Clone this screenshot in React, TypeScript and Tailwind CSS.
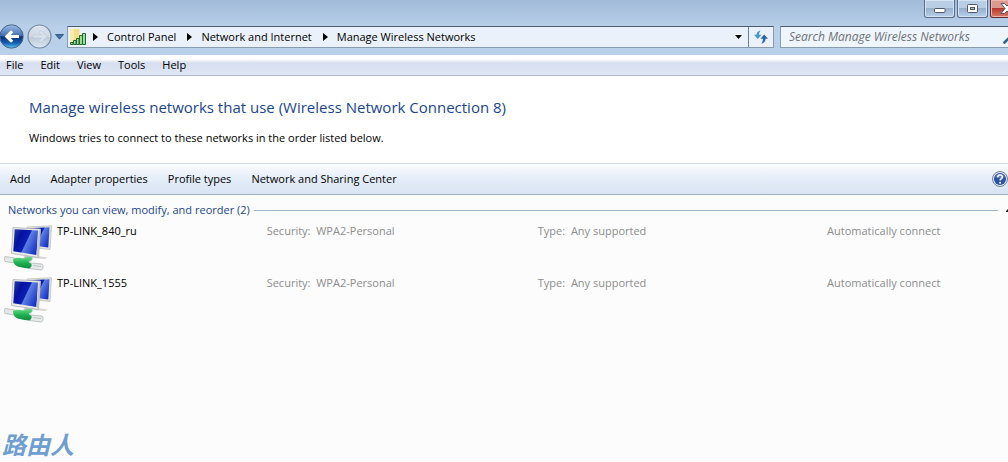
import React from "react";

const crumbs = ["Control Panel", "Network and Internet", "Manage Wireless Networks"];
const menus = ["File", "Edit", "View", "Tools", "Help"];
const commands = ["Add", "Adapter properties", "Profile types", "Network and Sharing Center"];
const networks = [
  { name: "TP-LINK_840_ru", security: "WPA2-Personal", type: "Any supported", mode: "Automatically connect" },
  { name: "TP-LINK_1555", security: "WPA2-Personal", type: "Any supported", mode: "Automatically connect" },
];

function BackIcon() {
  return (
    <svg width="25" height="25" viewBox="0 0 25 25" aria-hidden="true">
      <defs>
        <linearGradient id="back" x1="0" y1="0" x2="0" y2="1">
          <stop offset="0" stopColor="#9fbbe2" />
          <stop offset="0.45" stopColor="#4573b8" />
          <stop offset="0.52" stopColor="#0b2f7c" />
          <stop offset="0.78" stopColor="#1560b4" />
          <stop offset="1" stopColor="#5cc8f4" />
        </linearGradient>
      </defs>
      <circle cx="11.5" cy="12.5" r="11.7" fill="url(#back)" stroke="#4c6488" strokeWidth="1" />
      <path d="M4.500 12.500 11 6.200 13.300 8.300 10.800 11H19v3h-8.200l2.500 2.700L11 18.800z" fill="#fff" />
    </svg>
  );
}

function ForwardIcon() {
  return (
    <svg width="25" height="25" viewBox="0 0 25 25" aria-hidden="true">
      <defs>
        <linearGradient id="fwd" x1="0" y1="0" x2="0" y2="1">
          <stop offset="0" stopColor="#dde5ef" />
          <stop offset="0.5" stopColor="#ced8e3" />
          <stop offset="0.55" stopColor="#bccad9" />
          <stop offset="1" stopColor="#dbe7f3" />
        </linearGradient>
      </defs>
      <circle cx="12.5" cy="12.5" r="11.5" fill="url(#fwd)" stroke="#75899f" strokeWidth="1.200" />
      <path d="M20 12.500 14 6.500 12 8.500 14.500 11H6v3h8.500L12 16.500l2 2z" fill="#d9e1ea" stroke="#b4c4d5" strokeWidth="0.500" />
    </svg>
  );
}

function SignalIcon() {
  return (
    <svg width="17" height="18" viewBox="0 0 17 18" aria-hidden="true">
      <path d="M0 1h9.500v13H0z" fill="#f5de88" />
      <path d="M0 1h4v13H0z" fill="#faeba9" />
      <g fill="#9bdc9a" stroke="#23692f" strokeWidth="1">
        <path d="M.5 14.500h2.500v2H.5z" />
        <path d="M3.500 12.500h2.500v4H3.500z" />
        <path d="M6.500 10.500h2.500v6H6.500z" />
        <path d="M9.500 7.500h3v9h-3z" />
        <path d="M12.500 5.500h3v11h-3z" />
      </g>
    </svg>
  );
}

function Triangle() {
  return (
    <svg width="5" height="8" viewBox="0 0 5 8" aria-hidden="true">
      <path d="M0 0v8l5-4z" fill="#000" />
    </svg>
  );
}

function RefreshIcon() {
  return (
    <svg width="14" height="14" viewBox="0 0 14 14" aria-hidden="true">
      <path d="M6.500 0.500C4 .8 2.500 2.500 2.500 4.800H0L3.800 9l3.700-4.200H5C5 3.200 5.600 2 6.500.5z" fill="#3f9bd0" />
      <path d="M7.500 13.500c2.500-.3 4-2.200 4-4.700H14L10.200 4.600 6.500 8.800H9c0 1.700-.5 3.200-1.500 4.700z" fill="#2c62a8" />
    </svg>
  );
}

function HelpIcon() {
  return (
    <svg width="16" height="16" viewBox="0 0 16 16" aria-hidden="true">
      <circle cx="8" cy="8" r="7.500" fill="#dfe5ef" stroke="#75829b" strokeWidth="1" />
      <circle cx="8" cy="8" r="6" fill="#2a50a8" />
      <path d="M3 6a5.300 5.300 0 0 1 10 0c-2 1.500-7 2-10 0z" fill="#6f8fd0" opacity="0.600" />
      <path d="M5.700 6.300c0-1.600 1-2.300 2.300-2.300s2.400.8 2.400 2.100C10.400 7.700 8.100 7.800 8.100 9.500" fill="none" stroke="#fff" strokeWidth="1.600" />
      <circle cx="8.100" cy="11.700" r="1" fill="#fff" />
    </svg>
  );
}

function NetworkIcon() {
  return (
    <svg width="48" height="46" viewBox="0 0 48 46" aria-hidden="true">
      <defs>
        <linearGradient id="screen" x1="0" y1="0.200" x2="1" y2="0.700">
          <stop offset="0" stopColor="#2236a4" />
          <stop offset="0.25" stopColor="#0512a0" />
          <stop offset="0.52" stopColor="#0a1fb4" />
          <stop offset="0.56" stopColor="#5f7fe2" />
          <stop offset="1" stopColor="#1431c4" />
        </linearGradient>
        <linearGradient id="plug" x1="0" y1="0" x2="0" y2="1">
          <stop offset="0" stopColor="#6fdc8b" />
          <stop offset="0.5" stopColor="#1fb352" />
          <stop offset="1" stopColor="#0f8a3a" />
        </linearGradient>
      </defs>
      <path d="M23 2 47.500 .8 46 24.500 24 22z" fill="#e4e4df" stroke="#b9b9b7" strokeWidth="0.700" />
      <path d="M24.500 3.300 45.500 2.300 44.300 22.500 25 20z" fill="url(#screen)" />
      <path d="M33 31l11 1.500-3 1.500-13-1z" fill="#d5d7d9" />
      <path d="M22 29l8 1-3 7-9-2z" fill="#c4c8ca" />
      <path d="M9 2.500 36.500 4 34.500 32.500 7.500 28.500z" fill="#ecece8" stroke="#aeb0b2" strokeWidth="0.800" />
      <path d="M10.700 4.300 34 5.600 32.400 30 9.300 26.300z" fill="url(#screen)" />
      <path d="M34.700 6 36.500 4 34.500 32.500 32.400 30z" fill="#c4c5c5" />
      <path d="M1 31.500l10 1.500-.5 5L1 36.500c-1-1-1-4 0-5z" fill="#e5e8e8" stroke="#a9b0b0" strokeWidth="0.700" />
      <path d="M26 38l12 1c1.700 1 1.300 5.500-.5 6L25 43.500z" fill="#e8eaea" stroke="#a9b0b0" strokeWidth="0.700" />
      <path d="M9 34c3-2 8-1 11-.5 2-1.500 5-2 7.500-1.500l1 2-4 2.800 3 2.200c.5 2-.5 4-2.500 4.500-3 0-6-1-9-1.500C12 41.500 9 39 9 34z" fill="url(#plug)" />
      <path d="M29 40.500l8 1" stroke="#bcc4c4" strokeWidth="1" />
    </svg>
  );
}

const captionButton =
  "flex h-[18px] items-center justify-center rounded-b-[3px] border border-t-0 border-[#576d8b] bg-linear-to-b from-[#b9cde5] from-45% via-[#96afcd] via-50% to-[#b8d0ea] shadow-[inset_0_0_0_1px_#d5e3f2]";

export default function App() {
  return (
    <div className="flex min-h-screen flex-col overflow-hidden bg-[#fcfcfc] font-['Open_Sans','Noto_Sans_CJK_SC',sans-serif] text-[11px] leading-4 text-black">
      <header className="bg-linear-to-b from-[#a0bad8] to-[#b9d0ea] to-50% pb-1.5">
        <div className="-mr-[26px] flex justify-end gap-0.5">
          <button aria-label="Minimize" className={captionButton + " w-[31px]"}>
            <svg width="12" height="6" viewBox="0 0 12 6" className="mt-1" aria-hidden="true">
              <rect x="0.500" y="0.500" width="10.500" height="4" rx="1" fill="#fff" stroke="#535866" />
            </svg>
          </button>
          <button aria-label="Restore" className={captionButton + " w-[31px]"}>
            <svg width="12" height="10" viewBox="0 0 12 10" aria-hidden="true">
              <rect x="0.500" y="0.500" width="10" height="8" rx="1" fill="#fff" stroke="#535866" />
              <rect x="3.500" y="3.500" width="4" height="2" fill="#a9bdd6" stroke="#535866" />
            </svg>
          </button>
          <button
            aria-label="Close"
            className="flex h-[18px] w-[44px] items-center rounded-b-[3px] border border-t-0 border-[#5f2a2c] bg-linear-to-b from-[#dc9a8f] from-45% via-[#b8382a] via-50% to-[#d8776a] pl-[9px] shadow-[inset_0_0_0_1px_#eab5ad]"
          >
            <svg width="14" height="11" viewBox="0 0 14 11" aria-hidden="true">
              <path d="M1 .5h3.500L7 3 9.500 .5H13L9 5.500l4 5H9.500L7 8l-2.500 2.500H1l4-5z" fill="#fff" stroke="#535866" />
            </svg>
          </button>
        </div>

        <div className="-mr-3 mt-1.5 flex items-center">
          <button aria-label="Back"><BackIcon /></button>
          <button aria-label="Forward" className="ml-0.5"><ForwardIcon /></button>
          <button aria-label="Recent pages" className="mx-[3px]">
            <svg width="9" height="6" viewBox="0 0 9 6" aria-hidden="true">
              <path d="M.5 .5h8l-4 4.700z" fill="#3f74ad" stroke="#274b78" strokeWidth="0.800" />
            </svg>
          </button>
          <nav
            aria-label="Address"
            className="flex h-[22px] min-w-0 flex-1 items-center border border-[#8a9bb0] border-t-[#4d5b6c] bg-[#eaf1fa] pl-0.5"
          >
            <SignalIcon />
            {crumbs.map((c, i) => (
              <React.Fragment key={c}>
                <span className={i === 0 ? "ml-1.5 mr-[9px]" : "ml-[11px] mr-[9px]"}><Triangle /></span>
                <a href="#" className="whitespace-nowrap">{c}</a>
              </React.Fragment>
            ))}
            <button aria-label="Previous locations" className="ml-auto mr-1.5">
              <svg width="7" height="4" viewBox="0 0 7 4" aria-hidden="true">
                <path d="M0 0h7L3.500 4z" fill="#000" />
              </svg>
            </button>
            <button aria-label="Refresh" className="flex h-5 w-[25px] items-center justify-center border-l border-[#6d7f96]">
              <RefreshIcon />
            </button>
          </nav>
          <label className="ml-1.5 flex h-[22px] w-[240px] items-center border border-[#8a9bb0] border-t-[#4d5b6c] bg-[#eff5fc] pl-2">
            <input
              aria-label="Search Manage Wireless Networks"
              placeholder="Search Manage Wireless Networks"
              className="min-w-0 flex-1 bg-transparent text-[12px] italic outline-none placeholder:text-[#6d7379]"
            />
            <svg width="16" height="14" viewBox="0 0 16 14" className="shrink-0" aria-hidden="true">
              <path d="M1.500 12.500 7 7" stroke="#2f6391" strokeWidth="2.600" strokeLinecap="round" />
              <circle cx="9.500" cy="4.500" r="3.500" fill="none" stroke="#2f6391" strokeWidth="2" />
            </svg>
          </label>
        </div>
      </header>

      <nav
        aria-label="Menu bar"
        className="flex h-[21px] items-center gap-[17px] border-b border-[#b5b9c4] bg-linear-to-b from-white from-20% via-[#d6def0] via-40% to-[#dfe7f6] pl-1.5"
      >
        {menus.map((m) => (
          <button key={m}>{m}</button>
        ))}
      </nav>

      <section className="bg-white pb-[17px] pl-[29px] pt-[19px]">
        <h1 className="text-[15px] leading-6 text-[#1b4692]">
          Manage wireless networks that use (Wireless Network Connection 8)
        </h1>
        <p className="mt-[11px]">Windows tries to connect to these networks in the order listed below.</p>
      </section>

      <div className="flex h-8 items-center gap-5 border-y border-b-[#9fb1c6] border-t-[#d3dae3] bg-linear-to-b from-[#fafcfe] via-[#e4edf8] via-50% to-[#d9e4f3] pl-2.5">
        {commands.map((c) => (
          <button key={c} className="whitespace-nowrap">{c}</button>
        ))}
        <button aria-label="Help" className="ml-auto"><HelpIcon /></button>
      </div>

      <main className="flex-1">
        <div className="flex items-center pl-2 pt-[7px]">
          <h2 className="whitespace-nowrap text-[#21478b]">Networks you can view, modify, and reorder (2)</h2>
          <div className="ml-1 mr-2 h-px flex-1 bg-[#9fb4c6]" />
          <svg width="2" height="3" viewBox="0 0 2 3" aria-hidden="true">
            <path d="M0 2 2 0v3H0z" fill="#222" />
          </svg>
        </div>
        <table aria-label="Wireless networks" className="mt-px w-full table-fixed text-left">
          <colgroup>
            <col className="w-[57px]" />
            <col className="w-[20.8%]" />
            <col className="w-[26.9%]" />
            <col className="w-[28.7%]" />
            <col />
          </colgroup>
          <tbody className="text-[#8d8d8d]">
            {networks.map((n) => (
              <tr key={n.name} className="h-[52px] align-top">
                <td className="pl-1 pt-1.5"><NetworkIcon /></td>
                <th scope="row" className="pt-1 font-normal text-black">{n.name}</th>
                <td className="pt-1">Security:&nbsp; {n.security}</td>
                <td className="pt-1">Type:&nbsp; {n.type}</td>
                <td className="pt-1">{n.mode}</td>
              </tr>
            ))}
          </tbody>
        </table>
      </main>

      <footer className="pl-0.5 font-['Noto_Sans_CJK_SC',sans-serif] text-[24px] font-bold italic leading-9 text-[#6f9fd0]" lang="zh">
        路由人
      </footer>
    </div>
  );
}
